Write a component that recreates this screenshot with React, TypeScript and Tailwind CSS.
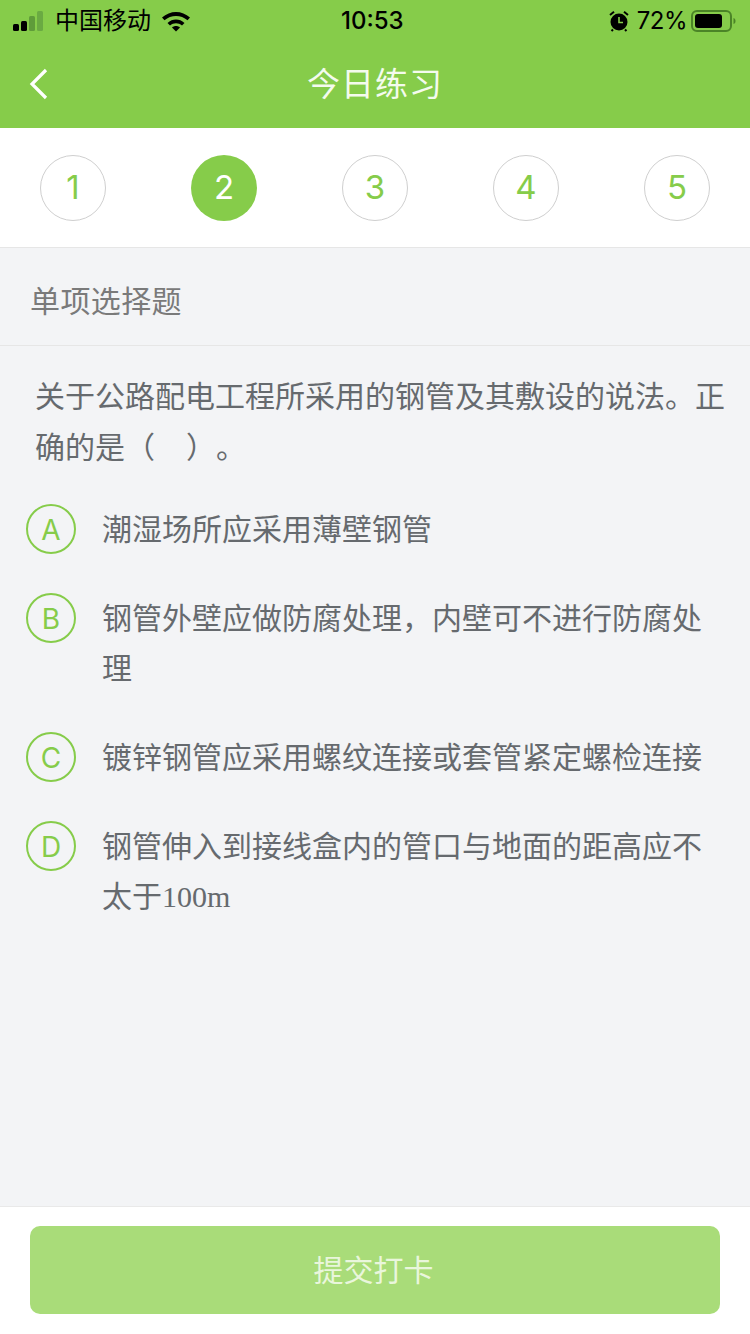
const font = "font-['Inter','Noto_Sans_CJK_SC',sans-serif]";

const steps = [1, 2, 3, 4, 5];

const options = [
  { key: "A", text: "潮湿场所应采用薄壁钢管" },
  { key: "B", text: "钢管外壁应做防腐处理，内壁可不进行防腐处理" },
  { key: "C", text: "镀锌钢管应采用螺纹连接或套管紧定螺检连接" },
  { key: "D", text: "钢管伸入到接线盒内的管口与地面的距高应不太于", tail: "100m" },
];

function StatusBar() {
  return (
    <div className="relative flex h-[41px] items-center justify-between pl-[13px] pr-[13px] text-black">
      <div className="flex items-center">
        <svg width="34" height="20" viewBox="0 0 34 20" className="mr-[8px]">
          <rect x="0" y="13" width="6" height="7" rx="1.5" fill="#000" />
          <rect x="8" y="10" width="6" height="10" rx="1.5" fill="#000" />
          <rect x="16" y="5" width="6" height="15" rx="1.5" fill="#5f9c3a" />
          <rect x="24" y="0" width="6" height="20" rx="1.5" fill="#6aaa42" />
        </svg>
        <span className="text-[24px] leading-none">中国移动</span>
        <svg width="30" height="22" viewBox="0 0 30 22" className="ml-[10px]">
          <path d="M1 7.5 C9 0 21 0 29 7.5 L26.5 10.2 C20 4.5 10 4.5 3.5 10.2 Z" fill="#000" />
          <path d="M6.5 13 C11.5 8.4 18.5 8.4 23.5 13 L21 15.6 C17.5 12.6 12.5 12.6 9 15.6 Z" fill="#000" />
          <path d="M11 17.6 C13.2 15.6 16.8 15.6 19 17.6 L15 21.6 Z" fill="#000" />
        </svg>
      </div>
      <span className="absolute left-[341px] top-[8px] text-[24px] font-medium leading-[26px]">10:53</span>
      <div className="flex items-center">
        <svg width="22" height="22" viewBox="0 0 22 22" className="mr-[7px]">
          <circle cx="11" cy="12" r="8.5" fill="#000" />
          <path d="M11 7 V12.5 H15" stroke="#86cc4a" strokeWidth="1.6" fill="none" />
          <path d="M2 5 L6 1.8 M20 5 L16 1.8 M5 19.5 L3.5 21 M17 19.5 L18.5 21" stroke="#000" strokeWidth="2" />
        </svg>
        <span className="text-[24px] leading-none tracking-[-0.5px]">72%</span>
        <svg width="46" height="24" viewBox="0 0 46 24" className="ml-[4px]">
          <rect x="1" y="2" width="39" height="20" rx="5" fill="none" stroke="#4b8427" strokeWidth="2" />
          <rect x="4" y="5" width="27" height="14" rx="3" fill="#000" />
          <path d="M42.5 9 C44 9.5 44.5 10.5 44.5 12 C44.5 13.5 44 14.5 42.5 15 Z" fill="#4b8427" />
        </svg>
      </div>
    </div>
  );
}

function Header() {
  return (
    <div className="bg-[#86cc4a]">
      <StatusBar />
      <div className="relative flex h-[87px] items-center justify-center">
        <svg width="20" height="32" viewBox="0 0 20 32" className="absolute left-[29px] top-[27px]">
          <path d="M17 2 L3 16 L17 30" fill="none" stroke="#fff" strokeWidth="3.2" />
        </svg>
        <span className="text-[33px] leading-none tracking-[1px] text-[#f4fbee]">今日练习</span>
      </div>
    </div>
  );
}

function Option({ optionKey, text, tail }: { optionKey: string; text: string; tail?: string }) {
  return (
    <div className="flex">
      <div className="flex h-[50px] w-[50px] shrink-0 items-center justify-center rounded-full border-2 border-[#86cc4a] pt-[2px] text-[28px] leading-none text-[#86cc4a]">
        {optionKey}
      </div>
      <p className="ml-[26px] w-[603px] text-[30px] leading-[50px] text-[#666a6e]">
        {text}
        {tail && <span className="font-['Liberation_Serif',serif]">{tail}</span>}
      </p>
    </div>
  );
}

export default function App() {
  return (
    <div className={`flex h-[1334px] w-[750px] flex-col overflow-hidden bg-[#f3f4f6] ${font}`}>
      <Header />

      {/* Step indicator */}
      <div className="flex h-[120px] items-center justify-between border-b border-[#e6e6e6] bg-white px-[40px]">
        {steps.map((n) => (
          <div
            key={n}
            className={`flex h-[66px] w-[66px] items-center justify-center rounded-full text-[33px] leading-none text-[#86cc4a] ${
              n === 2 ? "bg-[#86cc4a] text-white" : "border border-[#cfcfcf]"
            }`}
          >
            {n}
          </div>
        ))}
      </div>

      <div className="flex h-[98px] items-center border-b border-[#e6e6e6] pl-[30px] pt-[9px] text-[30px] leading-none tracking-[0.4px] text-[#7a7a7a]">
        单项选择题
      </div>

      <p className="ml-[35px] mt-[25px] w-[700px] text-[30px] leading-[51px] text-[#666a6e]">
        关于公路配电工程所采用的钢管及其敷设的说法。正确的是（<span className="inline-block w-[31px]" />）<span className="inline-block w-0" />。
      </p>

      <div className="ml-[26px] mt-[31px] flex flex-col gap-[39px]">
        {options.map((o) => (
          <Option key={o.key} optionKey={o.key} text={o.text} tail={o.tail} />
        ))}
      </div>

      {/* Submit bar */}
      <div className="mt-auto flex h-[128px] border-t border-[#e9e9e9] bg-white px-[30px] pt-[19px]">
        <button className="flex h-[88px] w-full items-center justify-center rounded-[10px] bg-[#a9dc79] pr-[3px] text-[30px] text-[#e9f6dc]">
          提交打卡
        </button>
      </div>
    </div>
  );
}
